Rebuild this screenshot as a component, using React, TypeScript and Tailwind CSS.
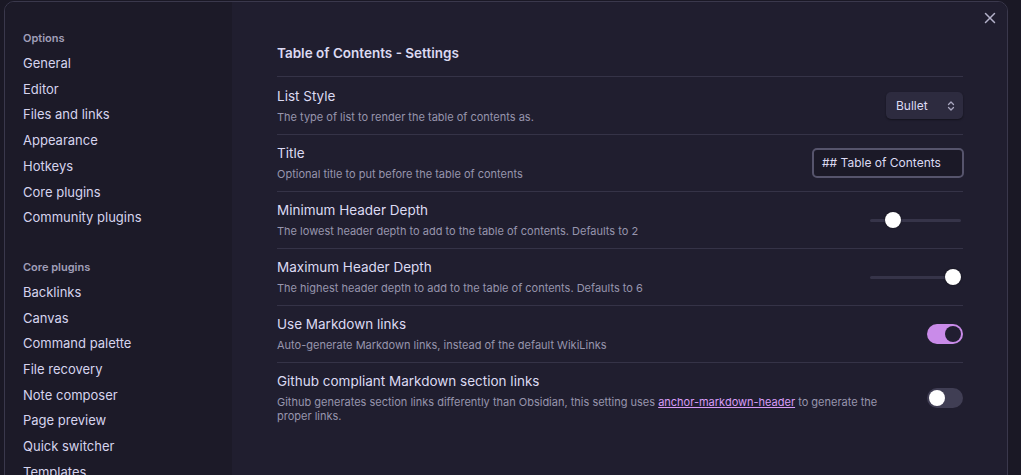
import React from "react";

const font = { fontFamily: "Inter, 'Noto Sans', sans-serif" };

function SideLabel({ children }: { children: React.ReactNode }) {
  return (
    <div className="h-[26px] flex items-center text-[11px] font-semibold text-[#a19fb8]">{children}</div>
  );
}
function SideItem({ children }: { children: React.ReactNode }) {
  return <div className="h-[25.7px] flex items-center text-[13px] text-[#d6d4ee]">{children}</div>;
}

function Row({
  name,
  desc,
  control,
  last,
  first,
}: {
  name: string;
  desc: React.ReactNode;
  control: React.ReactNode;
  last?: boolean;
  first?: boolean;
}) {
  return (
    <div
      className={`flex items-center gap-6 ${first ? "min-h-[58px] pt-[10.5px] pb-[10.5px]" : "min-h-[57px] py-[10px]"} ${
        last ? "" : "border-b border-[#353347]"
      }`}
    >
      <div className="flex-1 flex flex-col gap-[5px]">
        <div className="text-[13.5px] leading-[17px] text-[#dcdaf2]">{name}</div>
        <div className="text-[11px] leading-[14px] text-[#9795ad]">{desc}</div>
      </div>
      <div className="flex items-center">{control}</div>
    </div>
  );
}

function Slider({ pct }: { pct: number }) {
  return (
    <div className="relative w-[91px] h-[16px] mr-[2px] flex items-center">
      <div className="w-full h-[3px] rounded bg-[#363449]" />
      <div
        className="absolute top-0 w-[16px] h-[16px] rounded-full bg-white shadow-[0_0_2px_rgba(0,0,0,0.6)]"
        style={{ left: `calc(${pct}% - 8px)` }}
      />
    </div>
  );
}

function Toggle({ on }: { on: boolean }) {
  return (
    <div
      className={`w-[36px] h-[20px] rounded-full flex items-center px-[2px] ${
        on ? "bg-[#c98be9] justify-end" : "bg-[#403e54] justify-start"
      }`}
    >
      <div className={`w-[16px] h-[16px] rounded-full ${on ? "bg-[#211e31]" : "bg-white"}`} />
    </div>
  );
}

export default function App() {
  const options = ["General", "Editor", "Files and links", "Appearance", "Hotkeys", "Core plugins", "Community plugins"];
  const core = ["Backlinks", "Canvas", "Command palette", "File recovery", "Note composer", "Page preview", "Quick switcher", "Templates"];
  return (
    <div className="w-[1021px] h-[475px] overflow-hidden bg-[#1a1825] pl-[4px] pt-[1px] pr-[13px]" style={font}>
      <div className="relative flex h-[540px] rounded-[10px] border border-[#3a384c] overflow-hidden">
        <div className="w-[227px] shrink-0 bg-[#1c1a28] pl-[18px] pt-[23px]">
          <SideLabel>Options</SideLabel>
          {options.map((o) => (
            <SideItem key={o}>{o}</SideItem>
          ))}
          <div className="h-[23px]" />
          <SideLabel>Core plugins</SideLabel>
          {core.map((o) => (
            <SideItem key={o}>{o}</SideItem>
          ))}
        </div>
        <div className="flex-1 bg-[#201e2f] pl-[45px] pr-[44px] pt-[41px]">
          <div className="text-[13.5px] font-semibold text-[#dcdaf2] pb-[13px] border-b border-[#353347] leading-[20px]">
            Table of Contents - Settings
          </div>
          <Row
            first
            name="List Style"
            desc="The type of list to render the table of contents as."
            control={
              <div className="w-[77px] h-[27px] rounded-[5px] bg-[#2d2b3f] shadow-[0_1px_2px_rgba(0,0,0,0.4)] flex items-center justify-between pl-[10px] pr-[8px] text-[12px] text-[#dcdaf2]">
                <span>Bullet</span>
                <svg width="8" height="12" viewBox="0 0 8 12" fill="none" stroke="#a9a7c0" strokeWidth="1.3" strokeLinecap="round" strokeLinejoin="round">
                  <path d="M1.5 4.5 L4 2 L6.5 4.5" />
                  <path d="M1.5 7.5 L4 10 L6.5 7.5" />
                </svg>
              </div>
            }
          />
          <Row
            name="Title"
            desc="Optional title to put before the table of contents"
            control={
              <div className="w-[152px] h-[30px] -mr-[1px] rounded-[5px] border-2 border-[#56546c] bg-[#1b1927] flex items-center pl-[8px] text-[12px] text-[#dcdaf2]">
                ## Table of Contents
              </div>
            }
          />
          <Row
            name="Minimum Header Depth"
            desc="The lowest header depth to add to the table of contents. Defaults to 2"
            control={<Slider pct={25} />}
          />
          <Row
            name="Maximum Header Depth"
            desc="The highest header depth to add to the table of contents. Defaults to 6"
            control={<Slider pct={91} />}
          />
          <Row
            name="Use Markdown links"
            desc="Auto-generate Markdown links, instead of the default WikiLinks"
            control={<Toggle on />}
          />
          <Row
            last
            name="Github compliant Markdown section links"
            desc={
              <>
                Github generates section links differently than Obsidian, this setting uses{" "}
                <span className="text-[#d89cf7] underline">anchor-markdown-header</span> to generate the proper links.
              </>
            }
            control={<Toggle on={false} />}
          />
          <button className="absolute top-[9px] right-[10px] w-[14px] h-[14px] flex items-center justify-center">
            <svg width="12" height="12" viewBox="0 0 12 12" stroke="#b3b1c9" strokeWidth="1.5" strokeLinecap="round">
              <path d="M1.5 1.5 L10.5 10.5 M10.5 1.5 L1.5 10.5" />
            </svg>
          </button>
        </div>
      </div>
    </div>
  );
}
